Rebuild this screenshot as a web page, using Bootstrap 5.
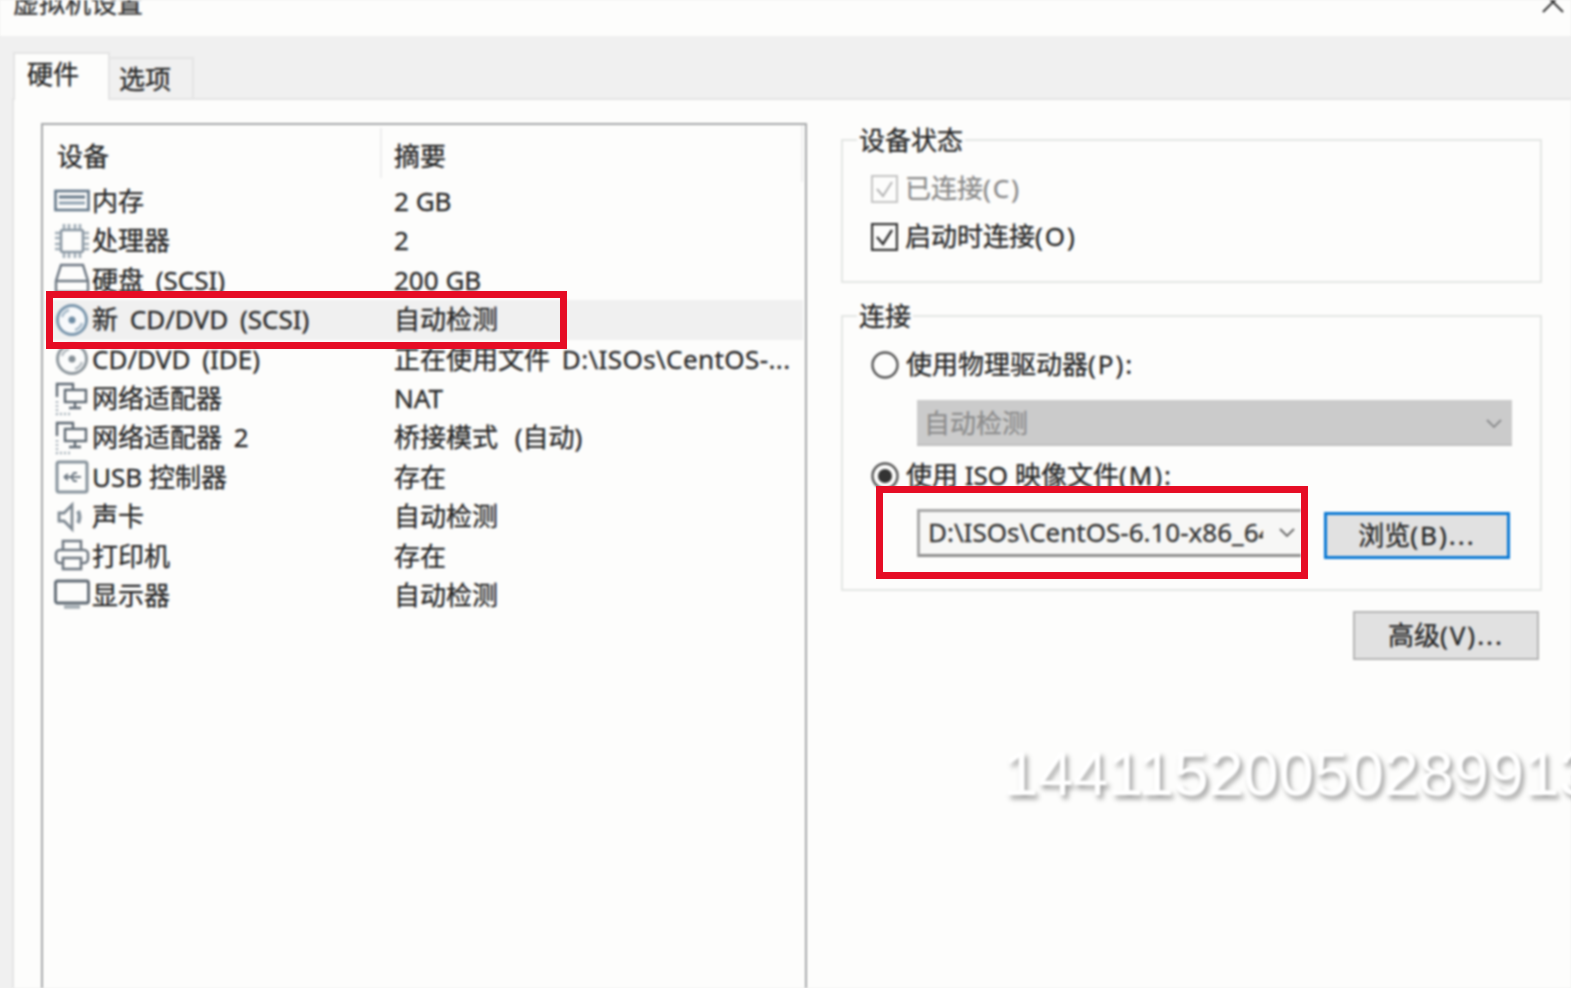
<!DOCTYPE html>
<html lang="zh-CN">
<head>
<meta charset="utf-8">
<title>虚拟机设置</title>
<link rel="stylesheet" href="https://cdn.jsdelivr.net/npm/bootstrap@5.3.0/dist/css/bootstrap.min.css">
<style>
html,body{height:100%;margin:0}
body{background:#f0f0f0;overflow:hidden;color:#262626;font-family:"Noto Sans","Noto Sans CJK SC",sans-serif;font-size:26px;line-height:1.2;-webkit-text-stroke:.3px currentColor}
.vm-stage{position:relative;height:988px;width:1571px;overflow:hidden}
.vm-soft{filter:blur(.8px);height:988px;display:flex;flex-direction:column}
.vm-title{height:36px;background:#fdfdfc;overflow:hidden;padding-left:13px;flex:none}
.vm-title span{display:block;margin-top:-12px;line-height:30px;color:#333}
.vm-close{margin-top:-10px;margin-right:6px}
.vm-tabs{height:62px;padding:16px 0 0 13px;flex:none;margin:0;border:0;align-items:flex-end}
.vm-tab{background:#fdfdfc;width:97px;padding:5px 0 0 12px;border:2px solid #e4e4e4;border-bottom:0;position:relative;z-index:1;margin-bottom:-2px;height:48px}
.vm-tab-off{width:84px;height:41px;background:#f0f0f0;padding:5px 0 0 9px;border:2px solid #e4e4e4;border-width:2px 2px 0 0}
.vm-panel{flex:1;min-height:0;background:#fdfdfc;border:2px solid #e4e4e4;border-width:2px 0 0 2px;margin-left:12px;padding:23px 0 0 27px;gap:34px;overflow:hidden}
.vm-list{width:766px;height:900px;flex:none;border:2px solid #a6a8a9;border-bottom:0;padding:0 2px;background:#fdfdfc}
.vm-head{height:57px;padding-top:5px;border-right:2px solid #f0f0f0}
.vm-row{height:39.4px;white-space:nowrap;word-spacing:5px}
.vm-tight{word-spacing:0}
.vm-wide{word-spacing:10px}
.vm-path{letter-spacing:.4px}
.vm-row-on{background:#f0f0f0}
.vm-c1{width:349px;flex:none;padding-left:9px;gap:2px;height:100%}
.vm-head .vm-c1{padding:8px 0 0 12px;border-right:2px solid #eee;width:337px;margin:-2px 12px 0 0;height:50px}
.vm-h2{height:50px;margin-top:-2px;padding-top:8px}
.vm-ico{width:36px;height:36px;flex:none}
.vm-side{width:701px;flex:none;padding-top:16px}
.vm-group{border:2px solid #e4e6e4;padding:0 28px;background:#fdfdfc}
.vm-g1{height:144px}
.vm-g2{height:276px;margin-top:32px}
.vm-legend{background:#fdfdfc;width:fit-content;margin:-16px 0 0 -14px;padding:0 2px;line-height:30px}
.vm-opt{gap:7px;height:48px}
.vm-lat{letter-spacing:2px}
.vm-muted{color:#8a8a8a}
.vm-g1 .vm-first{margin-top:10px}
.vm-g2 .vm-first{margin-top:10px}
.vm-drop{margin-left:46px;height:46px;width:595px;background:#cbcbcb;color:#8d8d8d;padding:3px 10px 0 7px;border-bottom:2px solid #c0c0c0;margin-top:11px}
.vm-radio2{margin-top:6px}
.vm-iso{margin:9px 0 0 46px;gap:23px}
.vm-combo{width:384px;height:48px;flex:none;background:#f7f7f6;border:3px solid #a8a8a8;border-right:0;border-bottom-color:#8f8f8f;padding:0 8px;gap:16px;overflow:hidden;white-space:nowrap;color:#333}
.vm-combo span{width:335px;overflow:hidden;flex:none}
.vm-combo svg{color:#666;flex:none}
.vm-btn{--bs-btn-border-radius:0;--bs-btn-font-size:26px;--bs-btn-color:#262626;--bs-btn-bg:#e1e1e1;--bs-btn-border-color:#b5b5b5;--bs-btn-padding-y:0;--bs-btn-padding-x:0;--bs-btn-line-height:1.2;width:186px;height:47px;font-family:inherit}
.vm-btn-main{border:3px solid #0a78d4;margin-top:3px}
.vm-more{margin-top:20px;height:49px;margin-right:3px;border-width:2px}
.vm-mark{position:absolute;left:1003px;top:737px;font:63px/72px "Liberation Sans",Arial,sans-serif;color:#fff;white-space:nowrap;text-shadow:3px 4px 5px rgba(0,0,0,.38);-webkit-text-stroke:0}
.vm-red{position:absolute;border:7px solid #e60d25;pointer-events:none}
.vm-red-a{left:46px;top:291px;width:521px;height:58px}
.vm-red-b{left:876px;top:486px;width:432px;height:93px}
</style>
</head>
<body>
<svg width="0" height="0" class="position-absolute">
<defs>
<symbol id="i-mem" viewBox="0 0 36 36"><g fill="none" stroke="#66798a" stroke-width="2.6"><rect x="1.500" y="7" width="33" height="19"/><path d="M5 13h26" stroke-width="3"/><path d="M5 19h26" stroke="#8fa1b0" stroke-width="3"/></g></symbol>
<symbol id="i-cpu" viewBox="0 0 36 36"><g fill="none" stroke="#8b98a3" stroke-width="2.6"><rect x="7" y="7" width="22" height="22" rx="2"/><path d="M10 1v5M15 1v5M21 1v5M26 1v5M10 30v5M15 30v5M21 30v5M26 30v5M1 10h5M1 15h5M1 21h5M1 26h5M30 10h5M30 15h5M30 21h5M30 26h5" stroke="#a0acb5"/></g></symbol>
<symbol id="i-hdd" viewBox="0 0 36 36"><g fill="none" stroke="#6d7782" stroke-width="2.400"><path d="M7 3h22l5 16v11H2V19z"/><path d="M2 19h32"/></g></symbol>
<symbol id="i-cd" viewBox="0 0 36 36"><circle cx="18" cy="18" r="14.500" fill="#f7f9fb" stroke="#7b97ad" stroke-width="3"/><circle cx="18" cy="18" r="3.500" fill="#6f8ca3"/><path d="M8 15a11 11 0 0 1 7-7M28 21a11 11 0 0 1-7 7" fill="none" stroke="#a9bccb" stroke-width="2.400"/></symbol>
<symbol id="i-cdg" viewBox="0 0 36 36"><circle cx="18" cy="18" r="14.500" fill="#fbfcfc" stroke="#8e979d" stroke-width="3"/><circle cx="18" cy="18" r="3.500" fill="#858f96"/><path d="M8 15a11 11 0 0 1 7-7M28 21a11 11 0 0 1-7 7" fill="none" stroke="#b6bdc2" stroke-width="2.400"/></symbol>
<symbol id="i-net" viewBox="0 0 36 36"><g fill="none" stroke="#5f6973" stroke-width="2.400"><path d="M3 16V3h16v5"/><rect x="11" y="9" width="21" height="12"/><path d="M21 21v6M15 27h12"/></g><path d="M3 20v13h14" fill="none" stroke="#a8b2ba" stroke-width="2.400" stroke-dasharray="2 2"/></symbol>
<symbol id="i-usb" viewBox="0 0 36 36"><rect x="3" y="3" width="30" height="30" rx="2" fill="none" stroke="#87939c" stroke-width="3"/><path d="M10 18h17M10 18l4-3M10 18l4 3M17 18l3-4h3M17 18l3 4h3" fill="none" stroke="#6f7a84" stroke-width="2"/></symbol>
<symbol id="i-snd" viewBox="0 0 36 36"><path d="M5 14h5l8-8v24l-8-8H5z" fill="none" stroke="#808a93" stroke-width="2.800"/><path d="M24 12c2 4 2 8 0 12" fill="none" stroke="#8a96a0" stroke-width="4"/></symbol>
<symbol id="i-prn" viewBox="0 0 36 36"><g fill="none" stroke="#717a83" stroke-width="2.600"><path d="M9 12V3h18v9"/><rect x="2" y="12" width="32" height="13" rx="4"/><rect x="9" y="20" width="18" height="11" fill="#fdfdfc"/></g></symbol>
<symbol id="i-mon" viewBox="0 0 36 36"><rect x="1.500" y="3" width="33" height="22" rx="2" fill="none" stroke="#5f6973" stroke-width="2.800"/><path d="M10 29h16" stroke="#a3acb3" stroke-width="3.500"/></symbol>
<symbol id="i-chev" viewBox="0 0 16 10"><path d="M1 1l7 7 7-7" fill="none" stroke="currentColor" stroke-width="1.800"/></symbol>
</defs>
</svg>

<div class="vm-stage">
  <div class="vm-soft">
    <div class="vm-title d-flex justify-content-between">
      <span>虚拟机设置</span>
      <svg class="vm-close" width="24" height="24" viewBox="0 0 24 24"><path d="M2 2l20 20M22 2L2 22" stroke="#333" stroke-width="2"/></svg>
    </div>

    <ul class="nav vm-tabs">
      <li class="vm-tab">硬件</li>
      <li class="vm-tab-off">选项</li>
    </ul>

    <div class="vm-panel d-flex">
      <div class="vm-list">
        <div class="d-flex vm-head">
          <div class="vm-c1 d-flex align-items-center">设备</div>
          <div class="vm-h2 d-flex align-items-center">摘要</div>
        </div>
        <div class="d-flex align-items-center vm-row"><div class="vm-c1 d-flex align-items-center"><svg class="vm-ico"><use href="#i-mem"/></svg>内存</div><div class="vm-tight">2 GB</div></div>
        <div class="d-flex align-items-center vm-row"><div class="vm-c1 d-flex align-items-center"><svg class="vm-ico"><use href="#i-cpu"/></svg>处理器</div><div>2</div></div>
        <div class="d-flex align-items-center vm-row"><div class="vm-c1 d-flex align-items-center"><svg class="vm-ico"><use href="#i-hdd"/></svg>硬盘 (SCSI)</div><div class="vm-tight">200 GB</div></div>
        <div class="d-flex align-items-center vm-row vm-row-on"><div class="vm-c1 d-flex align-items-center"><svg class="vm-ico"><use href="#i-cd"/></svg>新 CD/DVD (SCSI)</div><div>自动检测</div></div>
        <div class="d-flex align-items-center vm-row"><div class="vm-c1 d-flex align-items-center"><svg class="vm-ico"><use href="#i-cdg"/></svg>CD/DVD (IDE)</div><div>正在使用文件 <span class="vm-path">D:\ISOs\CentOS-...</span></div></div>
        <div class="d-flex align-items-center vm-row"><div class="vm-c1 d-flex align-items-center"><svg class="vm-ico"><use href="#i-net"/></svg>网络适配器</div><div>NAT</div></div>
        <div class="d-flex align-items-center vm-row"><div class="vm-c1 d-flex align-items-center"><svg class="vm-ico"><use href="#i-net"/></svg>网络适配器 2</div><div class="vm-wide">桥接模式 (自动)</div></div>
        <div class="d-flex align-items-center vm-row"><div class="vm-c1 d-flex align-items-center vm-tight"><svg class="vm-ico"><use href="#i-usb"/></svg>USB 控制器</div><div>存在</div></div>
        <div class="d-flex align-items-center vm-row"><div class="vm-c1 d-flex align-items-center"><svg class="vm-ico"><use href="#i-snd"/></svg>声卡</div><div>自动检测</div></div>
        <div class="d-flex align-items-center vm-row"><div class="vm-c1 d-flex align-items-center"><svg class="vm-ico"><use href="#i-prn"/></svg>打印机</div><div>存在</div></div>
        <div class="d-flex align-items-center vm-row"><div class="vm-c1 d-flex align-items-center"><svg class="vm-ico"><use href="#i-mon"/></svg>显示器</div><div>自动检测</div></div>
      </div>

      <div class="vm-side">
        <div class="vm-group vm-g1">
          <div class="vm-legend">设备状态</div>
          <div class="d-flex align-items-center vm-opt vm-muted vm-first">
            <svg width="27" height="28" viewBox="0 0 27 28"><rect x="1" y="1" width="25" height="26" fill="none" stroke="#c4c4c4" stroke-width="2"/><path d="M6 14l6 7 9-14" fill="none" stroke="#b5b5b5" stroke-width="2"/></svg>
            <span>已连接<span class="vm-lat">(C)</span></span>
          </div>
          <div class="d-flex align-items-center vm-opt">
            <svg width="27" height="28" viewBox="0 0 27 28"><rect x="1" y="1" width="25" height="26" fill="none" stroke="#333" stroke-width="2.400"/><path d="M6 14l6 7 9-14" fill="none" stroke="#333" stroke-width="2.400"/></svg>
            <span>启动时连接<span class="vm-lat">(O)</span></span>
          </div>
        </div>

        <div class="vm-group vm-g2">
          <div class="vm-legend">连接</div>
          <div class="d-flex align-items-center vm-opt vm-first">
            <svg width="28" height="28" viewBox="0 0 28 28"><circle cx="14" cy="14" r="12.500" fill="none" stroke="#555" stroke-width="2.400"/></svg>
            <span>使用物理驱动器<span class="vm-lat">(P):</span></span>
          </div>
          <div class="vm-drop d-flex align-items-center justify-content-between">
            <span>自动检测</span>
            <svg width="16" height="10" class="text-body-secondary opacity-50"><use href="#i-chev"/></svg>
          </div>
          <div class="d-flex align-items-center vm-opt vm-radio2">
            <svg width="28" height="28" viewBox="0 0 28 28"><circle cx="14" cy="14" r="12.500" fill="none" stroke="#555" stroke-width="2.400"/><circle cx="14" cy="14" r="7" fill="#333"/></svg>
            <span>使用 ISO 映像文件<span class="vm-lat">(M):</span></span>
          </div>
          <div class="d-flex vm-iso align-items-start">
            <div class="vm-combo d-flex align-items-center">
              <span>D:\ISOs\CentOS-6.10-x86_64</span>
              <svg width="16" height="10"><use href="#i-chev"/></svg>
            </div>
            <button type="button" class="btn vm-btn vm-btn-main">浏览<span class="vm-lat">(B)...</span></button>
          </div>
        </div>

        <div class="d-flex justify-content-end">
          <button type="button" class="btn vm-btn vm-more">高级<span class="vm-lat">(V)...</span></button>
        </div>
      </div>
    </div>
    <div class="vm-mark">14411520050289913</div>
  </div>
  <div class="vm-red vm-red-a"></div>
  <div class="vm-red vm-red-b"></div>
</div>
<script src="https://cdn.jsdelivr.net/npm/bootstrap@5.3.0/dist/js/bootstrap.bundle.min.js"></script>
</body>
</html>
